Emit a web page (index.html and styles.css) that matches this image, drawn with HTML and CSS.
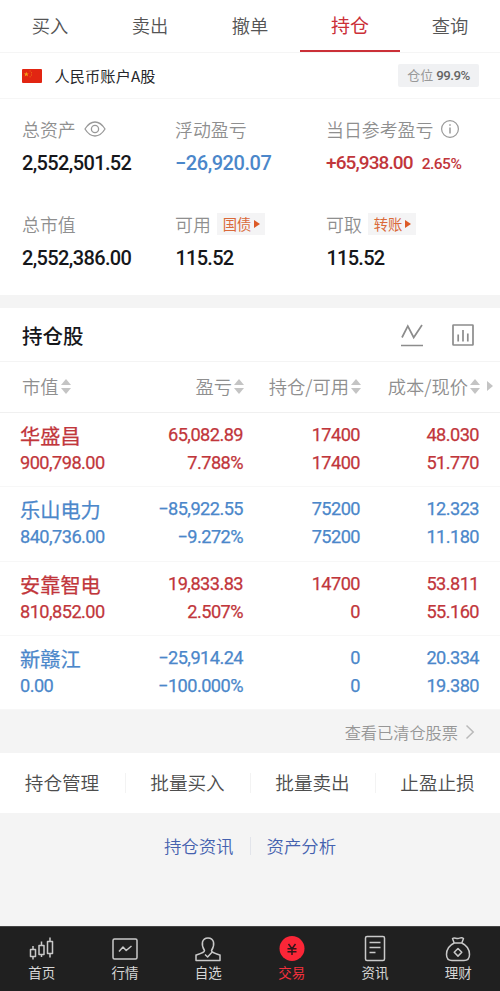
FILE: index.html
```html
<!DOCTYPE html>
<html lang="zh-CN">
<head>
<meta charset="utf-8">
<title>持仓</title>
<link rel="stylesheet" href="styles.css">
</head>
<body>
<nav class="tabs">
  <a class="tab">买入</a><a class="tab">卖出</a><a class="tab">撤单</a><a class="tab active">持仓</a><a class="tab">查询</a>
</nav>
<section class="account">
  <svg class="flag" width="20" height="14" viewBox="0 0 20 14"><rect width="20" height="14" rx="1" fill="#e22512"/><path d="M4.3 2.8l.7 1.7h1.8L5.4 5.6l.5 1.8-1.6-1.1-1.6 1.1.5-1.8-1.4-1.1h1.8z" fill="#f5a019"/><path d="M7.6 2h1M9 3.8h1M9 6h1M7.6 7.8h1" stroke="#f08a18" stroke-width=".8"/></svg>
  <span class="account-name">人民币账户A股</span>
  <span class="position">仓位 <b class="num">99.9%</b></span>
</section>
<section class="summary">
  <div class="stat"><div class="label">总资产<svg class="eye" width="22" height="16" viewBox="0 0 22 16" fill="none" stroke="#999" stroke-width="1.3"><path d="M1 8Q5.3 1 11 1T21 8Q16.700 15 11 15T1 8z"/><circle cx="11" cy="8" r="3.600"/></svg></div><div class="value num">2,552,501.52</div></div>
  <div class="stat"><div class="label">浮动盈亏</div><div class="value num blue wide">−26,920.07</div></div>
  <div class="stat"><div class="label">当日参考盈亏<svg class="info" width="20" height="20" viewBox="0 0 20 20" fill="none" stroke="#999" stroke-width="1.2"><circle cx="10" cy="10" r="8.400"/><path d="M10 8.500v6M10 5.300v1.500" stroke-width="1.500"/></svg></div><div class="value num red today">+65,938.00<small>2.65%</small></div></div>
  <div class="stat"><div class="label">总市值</div><div class="value num">2,552,386.00</div></div>
  <div class="stat"><div class="label">可用<span class="tag">国债<i></i></span></div><div class="value num short">115.52</div></div>
  <div class="stat"><div class="label">可取<span class="tag">转账<i></i></span></div><div class="value num short">115.52</div></div>
</section>
<section class="holdings">
  <header class="holdings-head">
    <h2>持仓股</h2>
    <svg width="24" height="24" viewBox="0 0 24 24" fill="none" stroke="#8c8c8c" stroke-width="1.700"><path d="M2 14.500L7.800 3 13.700 14.500 22 2M1 22.500h22"/></svg>
    <svg width="24" height="24" viewBox="0 0 24 24" fill="none" stroke="#8c8c8c" stroke-width="1.700"><rect x="2" y="2" width="20" height="20" rx=".5"/><path d="M7.200 11.500v7M12 7v11.500M16.800 10.500v8"/></svg>
  </header>
  <div class="row columns">
    <span>市值<i class="sort"></i></span><span>盈亏<i class="sort"></i></span><span>持仓/可用<i class="sort"></i></span><span>成本/现价<i class="sort"></i></span><i class="more"></i>
  </div>
  <div class="row stock red"><div><strong>华盛昌</strong><span>900,798.00</span></div><div><span>65,082.89</span><span>7.788%</span></div><div><span>17400</span><span>17400</span></div><div><span>48.030</span><span>51.770</span></div></div>
  <div class="row stock blue"><div><strong>乐山电力</strong><span>840,736.00</span></div><div><span>−85,922.55</span><span>−9.272%</span></div><div><span>75200</span><span>75200</span></div><div><span>12.323</span><span>11.180</span></div></div>
  <div class="row stock red"><div><strong>安靠智电</strong><span>810,852.00</span></div><div><span>19,833.83</span><span>2.507%</span></div><div><span>14700</span><span>0</span></div><div><span>53.811</span><span>55.160</span></div></div>
  <div class="row stock blue"><div><strong>新赣江</strong><span>0.00</span></div><div><span>−25,914.24</span><span>−100.000%</span></div><div><span>0</span><span>0</span></div><div><span>20.334</span><span>19.380</span></div></div>
</section>
<a class="cleared">查看已清仓股票<svg width="10" height="16" viewBox="0 0 10 16" fill="none" stroke="#b9b9b9" stroke-width="1.500"><path d="M1.500 1.500L8.200 8 1.500 14.500"/></svg></a>
<div class="actions"><a>持仓管理</a><a>批量买入</a><a>批量卖出</a><a>止盈止损</a></div>
<div class="links"><a>持仓资讯</a><a>资产分析</a></div>
<nav class="bottom">
  <a><svg viewBox="0 0 28 28"><path d="M5 12v3.500M5 22.500v3M2.500 15.500h5v7h-5zM13.500 7.500v4M13.500 20.500v2.500M11 11.500h5v9h-5zM22 3.500v4M22 19.500v4M19.500 7.500h5v12h-5z"/></svg>首页</a>
  <a><svg viewBox="0 0 28 28"><rect x="2" y="5" width="24" height="20" rx="1.500"/><path d="M8 17.500l4-4.500 3.200 3.500L20.500 12"/></svg>行情</a>
  <a><svg viewBox="0 0 28 28"><path d="M10.500 16.500C8 13 8 10.500 8.500 8c1.300-5.500 9.700-5.500 11 0 .5 2.500 .5 5-2 8.500 0 2 2 2.500 8.500 4.500v5.500H2V21c6.500-2 8.500-2.500 8.500-4.500z"/><path d="M11 20.500l2.600 2.500 4.600-5"/></svg>自选</a>
  <a class="active"><svg viewBox="0 0 28 28"><circle cx="14" cy="14.500" r="12.500"/><path d="M10.500 10l3.500 4.700 3.500-4.700M9.500 14.700h9M9.500 17.700h9M14 14.700V21"/></svg>交易</a>
  <a><svg viewBox="0 0 28 28"><rect x="4.500" y="2.500" width="19" height="24" rx="1.500"/><path d="M8.500 8.500h11M8.500 13.500h11M8.500 18.500h6"/></svg>资讯</a>
  <a><svg viewBox="0 0 28 28"><path d="M8.500 4.500c2-1.500 3.500.3 5.500 0s3.500-1.500 5.500 0L17.800 9h-7.600zM10.200 9C5 11.500 2.500 16 2.500 20.500c0 4 2 6 5.500 6h12c3.500 0 5.500-2 5.500-6 0-4.500-2.500-9-7.700-11.500M14 14.500l3.800 3.800-3.800 3.800-3.800-3.800z"/></svg>理财</a>
</nav>
</body>
</html>
```
FILE: styles.css
```css
* { box-sizing: border-box; }
body {
  margin: 0;
  width: 500px;
  height: 991px;
  display: flex;
  flex-direction: column;
  overflow: hidden;
  background: #f4f4f4;
  color: #16171b;
  font-family: "Noto Sans CJK SC", sans-serif;
}
i, b { font-style: normal; }
svg { flex: none; }
.num, .stock span { font-family: Roboto, "Noto Sans CJK SC", sans-serif; font-weight: 500; }
.red { color: #c1363b; }
.blue { color: #4b87ca; }

.tabs { display: flex; height: 53px; background: #fff; border-bottom: 1px solid #f5f5f5; }
.tab { flex: 1; height: 52px; line-height: 50px; text-align: center; font-size: 18.300px; color: #555; font-weight: 350; }
.tab.active { color: #cb3038; border-bottom: 2px solid #cb3038; font-size: 19px; font-weight: 400; }

.account { display: flex; align-items: center; height: 46px; padding: 0 21px 0 22px; background: #fff; border-bottom: 1px solid #f6f6f6; }
.account-name { margin-left: 12.500px; font-size: 15.200px; line-height: 20px; padding-bottom: 2px; letter-spacing: .1px; color: #26272b; }
.position { margin-left: auto; width: 81px; height: 23px; line-height: 22px; background: #f0f1f3; border-radius: 2px; text-align: center; font-size: 13px; color: #999; white-space: nowrap; }
.position .num { color: #666; font-size: 13.300px; letter-spacing: -.5px; }

.summary { display: grid; grid-template-columns: 153px 151px 1fr; grid-template-rows: 95px 101px; padding-left: 22px; background: #fff; height: 196px; }
.stat { padding-top: 16px; }
.label { display: flex; align-items: center; height: 28px; font-size: 17.900px; line-height: 26px; color: #8f8f8f; font-weight: 350; }
.eye { margin-left: 8px; }
.info { margin-left: 7px; }
.value { font-size: 20px; line-height: 28px; margin-top: 6px; letter-spacing: -.62px; white-space: nowrap; }
.value.wide { letter-spacing: -.45px; }
.value.short { letter-spacing: -.75px; padding-left: .5px; }
.value.today { font-size: 19px; letter-spacing: -.9px; }
.value small { margin-left: 9px; font-size: 15.500px; letter-spacing: -.5px; }
.tag { display: flex; align-items: center; margin-left: 6px; width: 48px; height: 22px; line-height: 20px; padding-left: 6px; background: #f4f4f5; color: #da6a3a; font-size: 14.300px; font-weight: 400; }
.tag i { margin-left: 3px; border-left: 6px solid #dc5a27; border-top: 4.500px solid transparent; border-bottom: 4.500px solid transparent; }

.holdings { margin-top: 13px; background: #fff; }
.holdings-head { display: flex; align-items: center; height: 54px; padding: 0 25px 0 22px; gap: 27px; border-bottom: 1px solid #f4f4f4; }
h2 { margin: 0 auto 0 0; font-size: 20.500px; font-weight: 500; line-height: 52px; }
.row { display: grid; grid-template-columns: 107px 116px 117px 119px; padding-left: 20px; }
.row > :nth-child(n+2) { text-align: right; }
.columns { position: relative; height: 51px; padding-bottom: 2px; line-height: 48px; font-size: 18.300px; color: #8f8f8f; font-weight: 350; border-bottom: 1px solid #f0f0f0; white-space: nowrap; }
.columns > span { display: flex; align-items: center; justify-content: flex-end; }
.columns > span:first-child { justify-content: flex-start; padding-left: 2px; }
.sort { width: 10px; margin: 0 -1px 0 2px; display: grid; gap: 3px; }
.sort::before, .sort::after { content: ""; border: 5px solid transparent; }
.sort::before { border-top: 0; border-bottom: 6px solid #c4c4c4; }
.sort::after { border-bottom: 0; border-top: 6px solid #c4c4c4; }
.more { position: absolute; left: 487px; top: 19px; border-left: 6px solid #c4c4c4; border-top: 5px solid transparent; border-bottom: 5px solid transparent; }
.stock { height: 74.300px; padding-top: 7px; border-bottom: 1px solid #f7f7f7; }
.stock span, .stock strong { display: block; height: 28px; line-height: 29px; white-space: nowrap; }
.stock span { font-size: 18.200px; letter-spacing: -.55px; font-weight: 400; -webkit-text-stroke: .25px currentColor; }
.stock strong { font-size: 20.200px; font-weight: 400; line-height: 31px; -webkit-text-stroke: .25px currentColor; }

.cleared { display: flex; justify-content: flex-end; align-items: center; gap: 7px; height: 43px; padding-right: 25px; font-size: 16.200px; line-height: 20px; color: #969696; font-weight: 350; }
.actions { display: grid; grid-template-columns: repeat(4, 1fr); align-items: center; height: 60px; background: #fff; font-size: 18.600px; color: #4d4d4d; font-weight: 350; }
.actions a { height: 20px; line-height: 18px; padding-right: 1px; text-align: center; white-space: nowrap; }
.actions a + a { border-left: 1px solid #f3f3f3; }
.links { display: flex; justify-content: center; padding: 24px 0 0; font-size: 17.400px; line-height: 18px; color: #4461af; font-weight: 350; }
.links a { padding: 0 16px; }
.links a + a { border-left: 1px solid #e2e4ea; }

.bottom { display: grid; grid-template-columns: repeat(6, 1fr); height: 65px; margin-top: auto; background: #202020; color: #d6d6d6; border-top: 1px solid #444; }
.bottom a { display: flex; flex-direction: column; align-items: center; padding-top: 7px; font-size: 13.500px; line-height: 21px; }
.bottom svg { width: 28px; height: 28px; fill: none; stroke: #c9c9c9; stroke-width: 1.500; stroke-linejoin: round; }
.bottom .active { color: #f2303d; }
.bottom .active circle { fill: #fb2637; stroke: none; }
.bottom .active path { stroke: #30151a; }
```
